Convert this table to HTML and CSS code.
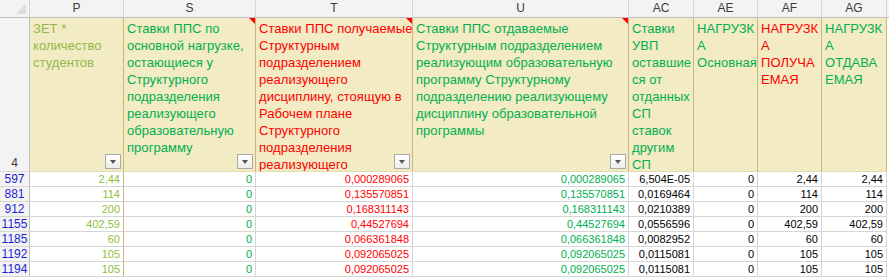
FILE: index.html
```html
<!DOCTYPE html>
<html lang="ru">
<head>
<meta charset="utf-8">
<title>Sheet</title>
<link rel="stylesheet" href="styles.css">
</head>
<body>
<div class="sheet">
  <div class="corner"><span class="corner-tri"></span></div>
  <div class="col">P</div>
  <div class="col">S</div>
  <div class="col">T</div>
  <div class="col">U</div>
  <div class="col">AC</div>
  <div class="col">AE</div>
  <div class="col">AF</div>
  <div class="col">AG</div>
  <div class="col col-edge"></div>

  <div class="rh rh-big">4</div>
  <div class="hc olive">ЗЕТ *<br>количество<br>студентов<span class="filter"></span></div>
  <div class="hc green">Ставки ППС по<br>основной нагрузке,<br>остающиеся у<br>Структурного<br>подразделения<br>реализующего<br>образовательную<br>программу<span class="note"></span><span class="filter"></span></div>
  <div class="hc red">Ставки ППС получаемые<br>Структурным<br>подразделением<br>реализующего<br>дисциплину, стоящую в<br>Рабочем плане<br>Структурного<br>подразделения<br>реализующего<span class="note"></span><span class="filter"></span></div>
  <div class="hc green">Ставки ППС отдаваемые<br>Структурным подразделением<br>реализующим образовательную<br>программу Структурному<br>подразделению реализующему<br>дисциплину образовательной<br>программы<span class="note"></span><span class="filter"></span></div>
  <div class="hc green">Ставки<br>УВП<br>оставшие<br>ся от<br>отданных<br>СП<br>ставок<br>другим<br>СП</div>
  <div class="hc green">НАГРУЗК<br>А<br>Основная</div>
  <div class="hc red">НАГРУЗК<br>А<br>ПОЛУЧА<br>ЕМАЯ</div>
  <div class="hc green">НАГРУЗК<br>А<br>ОТДАВА<br>ЕМАЯ</div>
  <div class="edge"></div>

  <div class="rh">597</div><div class="c cp">2,44</div><div class="c cg">0</div><div class="c cr">0,000289065</div><div class="c cg">0,000289065</div><div class="c">6,504E-05</div><div class="c">0</div><div class="c">2,44</div><div class="c">2,44</div><div class="edge"></div>
  <div class="rh">881</div><div class="c cp">114</div><div class="c cg">0</div><div class="c cr">0,135570851</div><div class="c cg">0,135570851</div><div class="c">0,0169464</div><div class="c">0</div><div class="c">114</div><div class="c">114</div><div class="edge"></div>
  <div class="rh">912</div><div class="c cp">200</div><div class="c cg">0</div><div class="c cr">0,168311143</div><div class="c cg">0,168311143</div><div class="c">0,0210389</div><div class="c">0</div><div class="c">200</div><div class="c">200</div><div class="edge"></div>
  <div class="rh">1155</div><div class="c cp">402,59</div><div class="c cg">0</div><div class="c cr">0,44527694</div><div class="c cg">0,44527694</div><div class="c">0,0556596</div><div class="c">0</div><div class="c">402,59</div><div class="c">402,59</div><div class="edge"></div>
  <div class="rh">1185</div><div class="c cp">60</div><div class="c cg">0</div><div class="c cr">0,066361848</div><div class="c cg">0,066361848</div><div class="c">0,0082952</div><div class="c">0</div><div class="c">60</div><div class="c">60</div><div class="edge"></div>
  <div class="rh">1192</div><div class="c cp">105</div><div class="c cg">0</div><div class="c cr">0,092065025</div><div class="c cg">0,092065025</div><div class="c">0,0115081</div><div class="c">0</div><div class="c">105</div><div class="c">105</div><div class="edge"></div>
  <div class="rh">1194</div><div class="c cp">105</div><div class="c cg">0</div><div class="c cr">0,092065025</div><div class="c cg">0,092065025</div><div class="c">0,0115081</div><div class="c">0</div><div class="c">105</div><div class="c">105</div><div class="edge"></div>
</div>
</body>
</html>
```

FILE: styles.css
```css
html, body {
  margin: 0;
  padding: 0;
  background: #ffffff;
}
body {
  width: 889px;
  height: 278px;
  overflow: hidden;
  font-family: "Liberation Sans", Arial, sans-serif;
}
.sheet {
  display: grid;
  grid-template-columns: 30px 94px 132px 157px 216px 65px 64px 64px 65px 2px;
  grid-template-rows: 18px 154px repeat(7, 15px);
}
.sheet > div {
  box-sizing: border-box;
  overflow: hidden;
  white-space: nowrap;
}
.corner {
  position: relative;
  background: #f3f3f3;
  border-right: 1px solid #d0d0d0;
  border-bottom: 1px solid #bdbdbd;
}
.corner-tri {
  position: absolute;
  right: 3px;
  bottom: 3px;
  width: 0;
  height: 0;
  border-left: 10px solid transparent;
  border-bottom: 10px solid #dcdcdc;
}
.col {
  background: #f3f3f3;
  border-right: 1px solid #d6d6d6;
  border-bottom: 1px solid #bdbdbd;
  color: #3c3c3c;
  font-size: 12px;
  line-height: 17px;
  text-align: center;
}
.col-edge {
  border-right: none;
}
.rh {
  background: #f3f3f3;
  border-right: 1px solid #bdbdbd;
  border-bottom: 1px solid #d6d6d6;
  color: #1f1fd8;
  font-size: 12px;
  line-height: 14px;
  text-align: center;
}
.rh-big {
  display: flex;
  align-items: flex-end;
  justify-content: center;
  color: #3c3c3c;
  padding-bottom: 1px;
}
.hc {
  position: relative;
  background: #f2ebc4;
  border-right: 1px solid #c9b67e;
  border-bottom: 1px solid #e4dcb0;
  font-size: 13px;
  letter-spacing: 0.05px;
  line-height: 17px;
  padding: 2px 0 0 3px;
}
.olive { color: #93b94b; }
.green { color: #00b050; }
.red { color: #ff0000; }
.filter {
  position: absolute;
  right: 2px;
  bottom: 2px;
  width: 16px;
  height: 15px;
  box-sizing: border-box;
  border: 1px solid #a9a9a9;
  background: linear-gradient(#ffffff, #ececec);
}
.filter::after {
  content: "";
  position: absolute;
  left: 4px;
  top: 5px;
  width: 0;
  height: 0;
  border-left: 3.5px solid transparent;
  border-right: 3.5px solid transparent;
  border-top: 4px solid #555555;
}
.note {
  position: absolute;
  right: 0;
  top: 0;
  width: 0;
  height: 0;
  border-left: 6px solid transparent;
  border-top: 6px solid #ff0000;
}
.edge {
  background: #ffffff;
}
.c {
  background: #ffffff;
  border-right: 1px solid #d6d6d6;
  border-bottom: 1px solid #d6d6d6;
  color: #000000;
  font-size: 11px;
  line-height: 14px;
  text-align: right;
  padding-right: 3px;
}
.cp {
  color: #8fbf40;
  border-right-color: #c9b67e;
  border-bottom-color: #d6d6d6;
}
.cg { color: #00b050; }
.cr { color: #ff0000; }
```
